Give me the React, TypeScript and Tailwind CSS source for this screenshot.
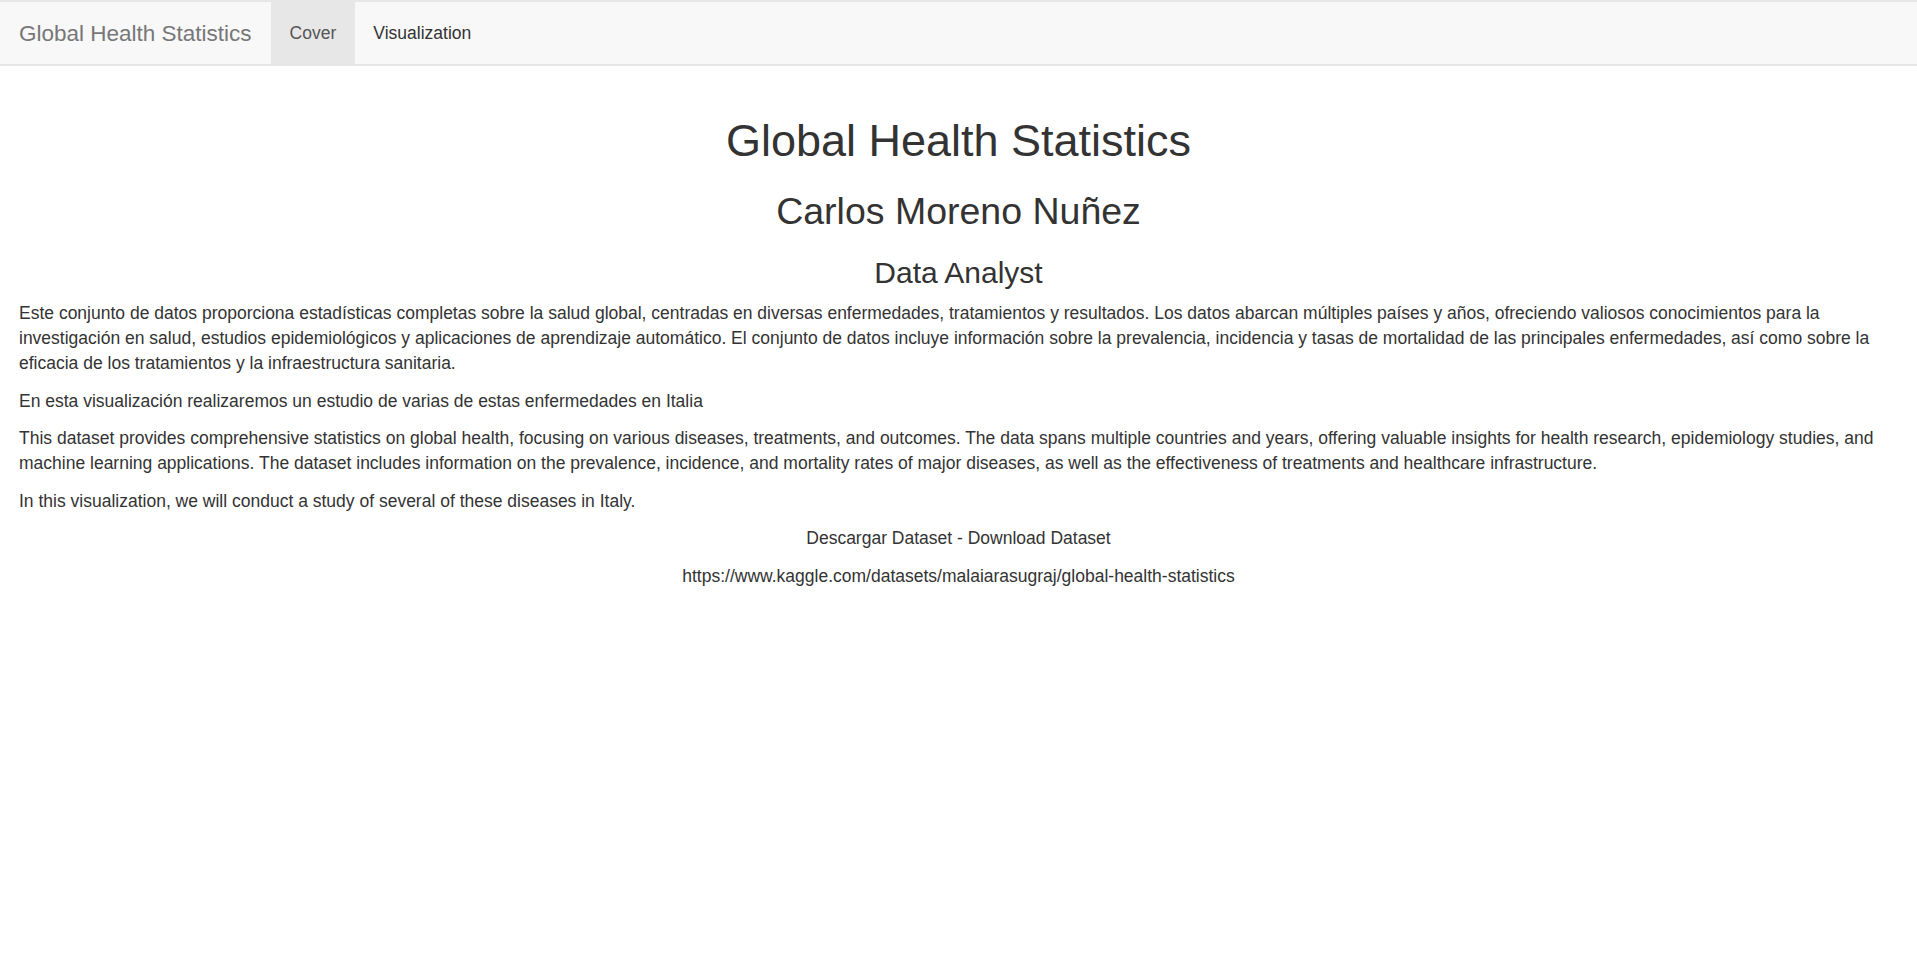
import React from 'react';

const font = { fontFamily: '"Liberation Sans", Arial, Helvetica, sans-serif' };

function Navbar() {
  return (
    <nav className="flex h-[66px] items-stretch border-y-2 border-[#e7e7e7] bg-[#f8f8f8]">
      <a className="flex items-center px-[19px] text-[22.5px] leading-[25px] text-[#777]">
        Global Health Statistics
      </a>
      <ul className="flex items-stretch">
        <li className="flex items-center bg-[#e7e7e7] px-[19px] text-[17.5px] text-[#555]">Cover</li>
        <li className="flex items-center px-[18px] text-[17.5px] text-[#333]">Visualization</li>
      </ul>
    </nav>
  );
}

export default function App() {
  return (
    <div className="min-h-screen bg-white text-[17.5px] leading-[25px] text-[#333]" style={font}>
      <Navbar />
      <main className="px-[19px] pt-[50px]">
        <h1 className="mb-[12.5px] text-center text-[45px] font-normal leading-[1.1]">Global Health Statistics</h1>
        <h2 className="mb-[12.5px] mt-[25px] text-center text-[37.5px] font-normal leading-[1.1]">Carlos Moreno Nuñez</h2>
        <h3 className="mb-[12.5px] mt-[24px] text-center text-[30px] font-normal leading-[1.1]">Data Analyst</h3>
        <p className="mb-[12.5px]">
          Este conjunto de datos proporciona estadísticas completas sobre la salud global, centradas en diversas enfermedades, tratamientos y resultados. Los datos abarcan múltiples países y años, ofreciendo valiosos conocimientos para la investigación en salud, estudios epidemiológicos y aplicaciones de aprendizaje automático. El conjunto de datos incluye información sobre la prevalencia, incidencia y tasas de mortalidad de las principales enfermedades, así como sobre la eficacia de los tratamientos y la infraestructura sanitaria.
        </p>
        <p className="mb-[12.5px]">En esta visualización realizaremos un estudio de varias de estas enfermedades en Italia</p>
        <p className="mb-[12.5px]">
          This dataset provides comprehensive statistics on global health, focusing on various diseases, treatments, and outcomes. The data spans multiple countries and years, offering valuable insights for health research, epidemiology studies, and machine learning applications. The dataset includes information on the prevalence, incidence, and mortality rates of major diseases, as well as the effectiveness of treatments and healthcare infrastructure.
        </p>
        <p className="mb-[12.5px]">In this visualization, we will conduct a study of several of these diseases in Italy.</p>
        <p className="mb-[12.5px] text-center">Descargar Dataset - Download Dataset</p>
        <p className="mb-[12.5px] text-center">https://www.kaggle.com/datasets/malaiarasugraj/global-health-statistics</p>
      </main>
    </div>
  );
}
